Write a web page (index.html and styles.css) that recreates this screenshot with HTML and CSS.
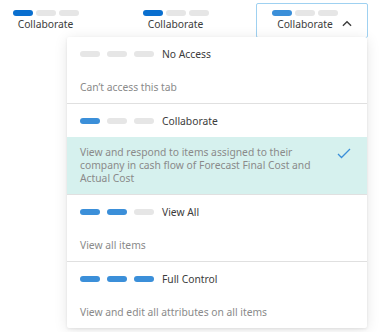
FILE: index.html
```html
<!DOCTYPE html>
<html lang="en">
<head>
  <meta charset="UTF-8">
  <meta name="viewport" content="width=device-width, initial-scale=1.0">
  <title>Permission Levels</title>
  <link rel="stylesheet" href="styles.css">
</head>
<body>
  <div class="tabs">
    <div class="tab">
      <div class="tab-body">
        <div class="pills dark"><span class="pill on"></span><span class="pill"></span><span class="pill"></span></div>
        <div class="tab-label">Collaborate</div>
      </div>
    </div>
    <div class="tab">
      <div class="tab-body">
        <div class="pills dark"><span class="pill on"></span><span class="pill"></span><span class="pill"></span></div>
        <div class="tab-label">Collaborate</div>
      </div>
    </div>
    <div class="tab open">
      <div class="tab-body">
        <div class="pills"><span class="pill on"></span><span class="pill"></span><span class="pill"></span></div>
        <div class="tab-label">Collaborate</div>
      </div>
      <svg class="chevron" width="11" height="7" viewBox="0 0 11 7">
        <polyline points="1,6 5.5,1.5 10,6" fill="none" stroke="#3c3c3c" stroke-width="1.5"/>
      </svg>
    </div>
  </div>

  <div class="menu">
    <div class="option">
      <div class="option-head">
        <div class="pills"><span class="pill"></span><span class="pill"></span><span class="pill"></span></div>
        <span class="option-name">No Access</span>
      </div>
      <div class="option-desc">Can’t access this tab</div>
    </div>
    <div class="option selected">
      <div class="option-head">
        <div class="pills"><span class="pill on"></span><span class="pill"></span><span class="pill"></span></div>
        <span class="option-name">Collaborate</span>
      </div>
      <div class="option-desc">
        <span class="desc-text">View and respond to items assigned to their company in cash flow of Forecast Final Cost and Actual Cost</span>
        <svg class="check" width="14" height="11" viewBox="0 0 14 11">
          <polyline points="1,6 4.5,9.5 13,1" fill="none" stroke="#3b8fd9" stroke-width="1.3"/>
        </svg>
      </div>
    </div>
    <div class="option">
      <div class="option-head">
        <div class="pills"><span class="pill on"></span><span class="pill on"></span><span class="pill"></span></div>
        <span class="option-name">View All</span>
      </div>
      <div class="option-desc">View all items</div>
    </div>
    <div class="option">
      <div class="option-head">
        <div class="pills"><span class="pill on"></span><span class="pill on"></span><span class="pill on"></span></div>
        <span class="option-name">Full Control</span>
      </div>
      <div class="option-desc">View and edit all attributes on all items</div>
    </div>
  </div>
</body>
</html>
```

FILE: styles.css
```css
html, body {
  margin: 0;
  background-color: #fff;
  font-family: 'Noto Sans', 'Open Sans', sans-serif;
  font-size: 10.3px;
  color: #3c3c3c;
}

.tabs {
  display: flex;
  gap: 18px;
  margin-left: -4px;
  padding-top: 3px;
}

.tab {
  box-sizing: border-box;
  width: 112px;
  height: 35px;
  padding: 6px 15px 0;
  border: 1px solid transparent;
  border-radius: 2px;
  display: flex;
  gap: 4px;
}

.tab.open {
  border-color: #9fd1f1;
}

.tab-body {
  display: flex;
  flex-direction: column;
  align-items: center;
  width: 67px;
}

.tab-label {
  margin-top: 1px;
  line-height: 14px;
  white-space: nowrap;
}

.chevron {
  margin-top: 10px;
}

.pills {
  display: flex;
  gap: 3px;
}

.pill {
  width: 20px;
  height: 6px;
  border-radius: 3px;
  background-color: #e6e6e6;
}

.pill.on {
  background-color: #3b8fd9;
}

.pills.dark .pill.on {
  background-color: #0a6fcf;
}

.menu {
  position: absolute;
  left: 67px;
  top: 37px;
  width: 300px;
  background-color: #fff;
  border-radius: 2px;
  box-shadow: 0 2px 14px rgba(0, 0, 0, 0.1), 0 1px 3px rgba(0, 0, 0, 0.08);
}

.option {
  border-bottom: 1px solid #e0e0e0;
}

.option:last-child {
  border-bottom: none;
}

.option-head {
  height: 33px;
  padding: 0 13px;
  display: flex;
  align-items: center;
}

.option-head .pills {
  gap: 7px;
  margin-right: 8px;
}

.option-desc {
  min-height: 33px;
  padding: 0 13px;
  display: flex;
  align-items: center;
  color: #8a8a8a;
}

.selected .option-desc {
  padding: 9px 16px 9px 13px;
  align-items: flex-start;
  gap: 18px;
  background-color: #d6f1ee;
  line-height: 13px;
  min-height: 0;
}

.desc-text {
  flex: 1;
}

.check {
  margin-top: 2px;
}
```
